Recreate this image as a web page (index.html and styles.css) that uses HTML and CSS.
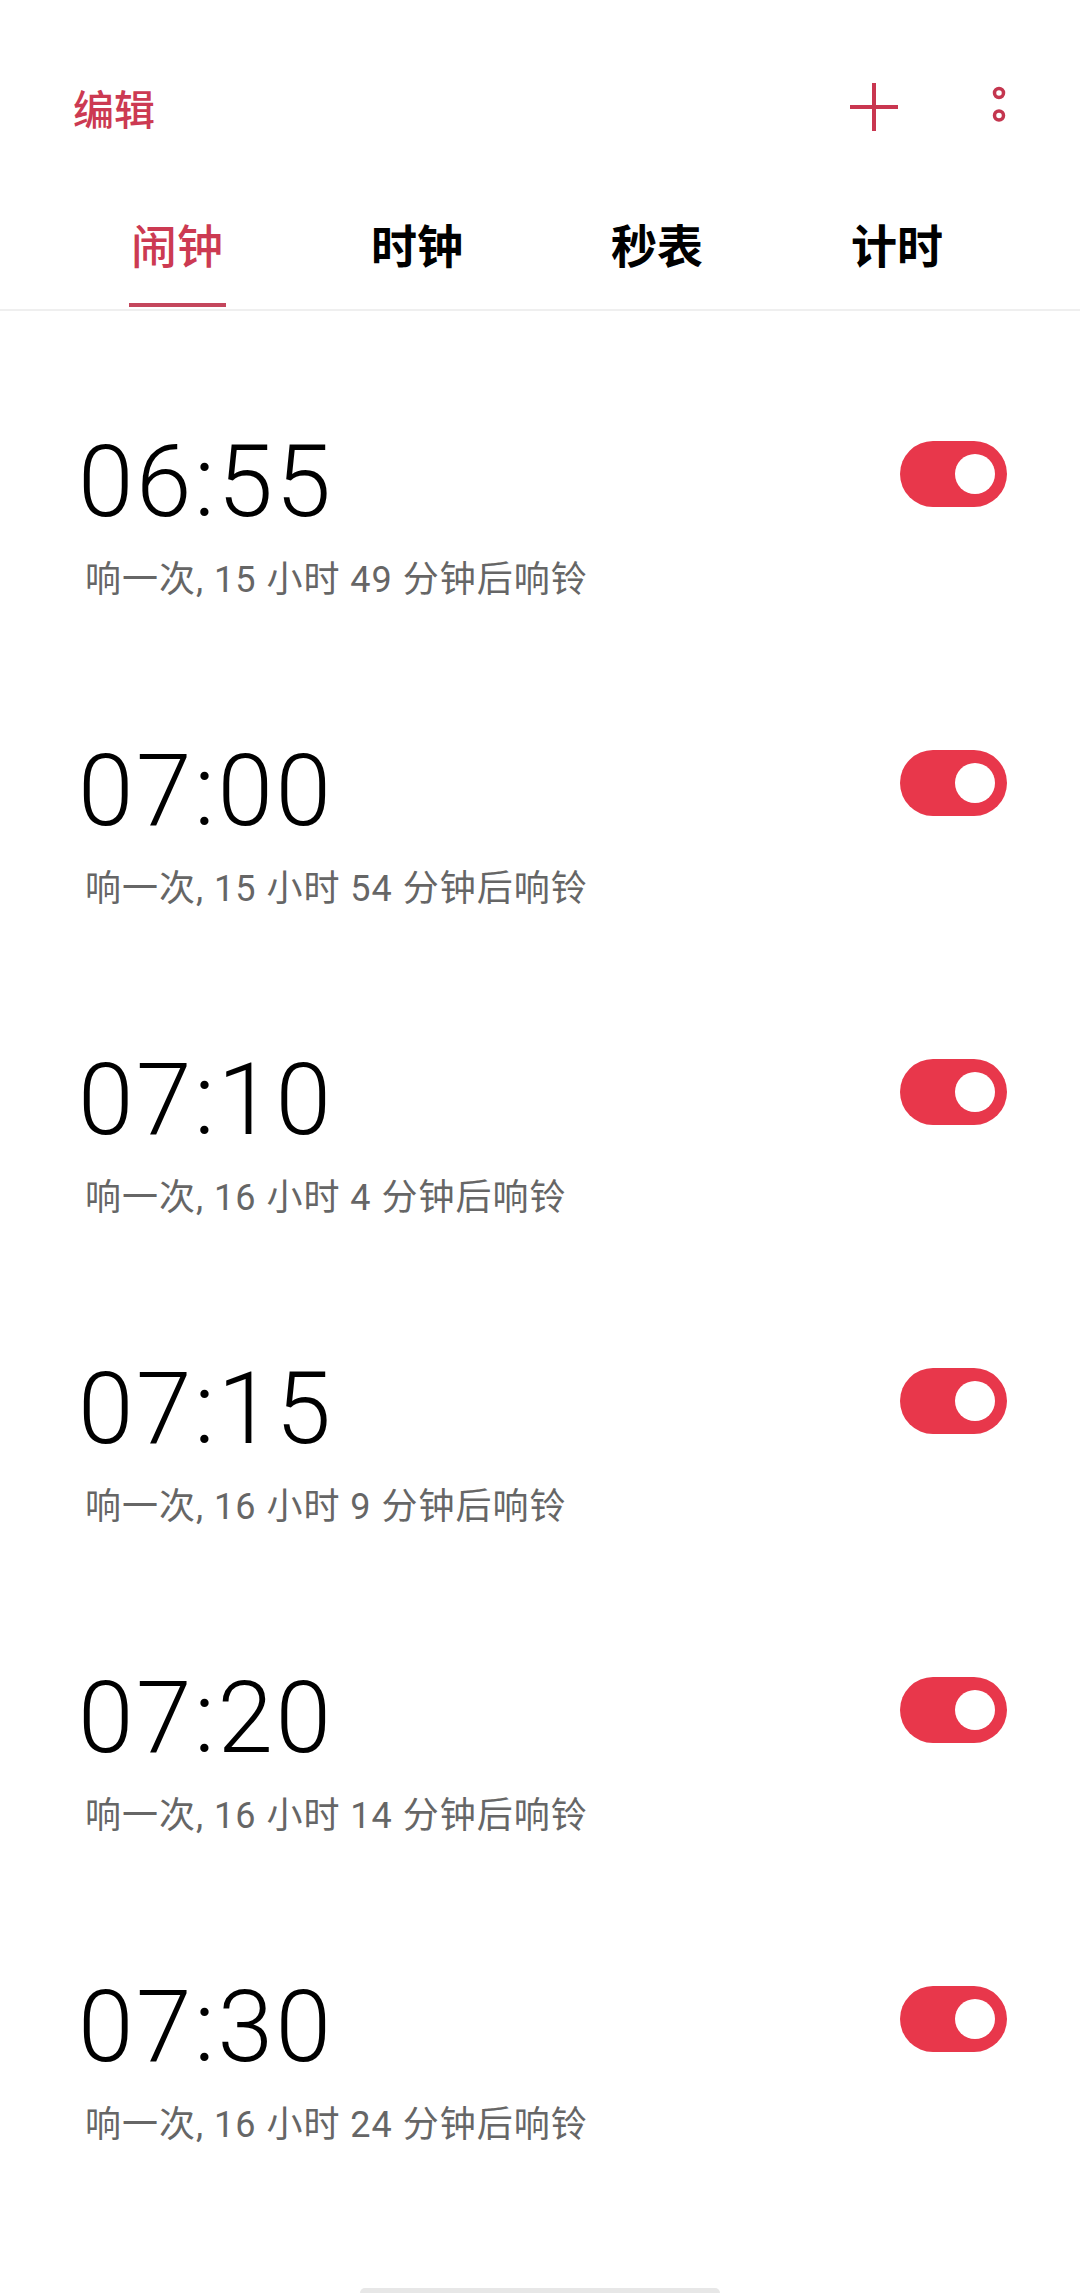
FILE: index.html
```html
<!DOCTYPE html>
<html lang="zh-CN">
<head>
    <meta charset="UTF-8">
    <meta name="viewport" content="width=device-width, initial-scale=1.0">
    <title>闹钟</title>
    <link rel="stylesheet" href="styles.css">
</head>
<body>
    <div class="app">
        <header class="topbar">
            <span class="edit-btn">编辑</span>
            <div class="actions">
                <svg class="icon-add" width="50" height="50" viewBox="0 0 50 50">
                    <line x1="25" y1="1" x2="25" y2="49" />
                    <line x1="1" y1="25" x2="49" y2="25" />
                </svg>
                <svg class="icon-more" width="14" height="36" viewBox="0 0 14 36">
                    <circle cx="7" cy="7" r="4.5" />
                    <circle cx="7" cy="29.5" r="4.5" />
                </svg>
            </div>
        </header>

        <nav class="tabs">
            <div class="tab active">
                <span class="tab-label">闹钟</span>
                <span class="tab-indicator"></span>
            </div>
            <div class="tab">
                <span class="tab-label">时钟</span>
                <span class="tab-indicator"></span>
            </div>
            <div class="tab">
                <span class="tab-label">秒表</span>
                <span class="tab-indicator"></span>
            </div>
            <div class="tab">
                <span class="tab-label">计时</span>
                <span class="tab-indicator"></span>
            </div>
        </nav>

        <ul class="alarm-list">
            <li class="alarm">
                <div class="alarm-info">
                    <div class="alarm-time">06:55</div>
                    <div class="alarm-desc">响一次, 15 小时 49 分钟后响铃</div>
                </div>
                <span class="switch on"><span class="knob"></span></span>
            </li>
            <li class="alarm">
                <div class="alarm-info">
                    <div class="alarm-time">07:00</div>
                    <div class="alarm-desc">响一次, 15 小时 54 分钟后响铃</div>
                </div>
                <span class="switch on"><span class="knob"></span></span>
            </li>
            <li class="alarm">
                <div class="alarm-info">
                    <div class="alarm-time">07:10</div>
                    <div class="alarm-desc">响一次, 16 小时 4 分钟后响铃</div>
                </div>
                <span class="switch on"><span class="knob"></span></span>
            </li>
            <li class="alarm">
                <div class="alarm-info">
                    <div class="alarm-time">07:15</div>
                    <div class="alarm-desc">响一次, 16 小时 9 分钟后响铃</div>
                </div>
                <span class="switch on"><span class="knob"></span></span>
            </li>
            <li class="alarm">
                <div class="alarm-info">
                    <div class="alarm-time">07:20</div>
                    <div class="alarm-desc">响一次, 16 小时 14 分钟后响铃</div>
                </div>
                <span class="switch on"><span class="knob"></span></span>
            </li>
            <li class="alarm">
                <div class="alarm-info">
                    <div class="alarm-time">07:30</div>
                    <div class="alarm-desc">响一次, 16 小时 24 分钟后响铃</div>
                </div>
                <span class="switch on"><span class="knob"></span></span>
            </li>
        </ul>

        <div class="home-area">
            <span class="home-bar"></span>
        </div>
    </div>
</body>
</html>
```

FILE: styles.css
```css
body {
    margin: 0;
    background-color: #fff;
    font-family: "Noto Sans CJK SC", "Noto Sans", sans-serif;
    color: #000;
}
.app {
    width: 1080px;
    height: 2293px;
    overflow: hidden;
}
.topbar {
    display: flex;
    justify-content: space-between;
    align-items: center;
    height: 214px;
    padding: 0 74px 0 73px;
    box-sizing: border-box;
}
.edit-btn {
    font-size: 41px;
    font-weight: 500;
    color: #cc3a52;
    line-height: 1;
}
.actions {
    display: flex;
    align-items: center;
    gap: 93px;
}
.icon-add line {
    stroke: #c93650;
    stroke-width: 4;
}
.icon-more {
    margin-top: -6px;
}
.icon-more circle {
    fill: none;
    stroke: #c4364f;
    stroke-width: 3.5;
}
.tabs {
    display: flex;
    height: 95px;
    padding: 0 63px 0 57px;
    border-bottom: 2px solid #efefef;
}
.tab {
    flex: 1;
    display: flex;
    flex-direction: column;
    align-items: center;
    padding-bottom: 2px;
}
.tab-label {
    font-size: 46px;
    font-weight: 700;
    line-height: 58px;
    color: #000;
}
.tab-indicator {
    margin-top: auto;
    width: 97px;
    height: 4px;
}
.tab.active .tab-label {
    font-weight: 500;
    color: #cc3a52;
}
.tab.active .tab-indicator {
    background-color: #c4465c;
}
.alarm-list {
    list-style: none;
    margin: 0;
    padding: 53px 0 0;
}
.alarm {
    display: flex;
    justify-content: space-between;
    align-items: flex-start;
    padding: 68px 73px 69px 78px;
}
.alarm-time {
    font-family: Roboto, "Noto Sans", sans-serif;
    font-weight: 300;
    font-size: 100px;
    line-height: 100px;
    letter-spacing: 2.5px;
    color: #000;
}
.alarm-desc {
    margin-top: 24px;
    padding-left: 7px;
    font-family: Roboto, "Noto Sans CJK SC", sans-serif;
    font-size: 36px;
    line-height: 48px;
    letter-spacing: 1px;
    color: #666;
}
.switch {
    display: flex;
    align-items: center;
    justify-content: flex-end;
    width: 107px;
    height: 66px;
    margin-top: 9px;
    padding-right: 12px;
    box-sizing: border-box;
    border-radius: 33px;
    background-color: #e8374b;
}
.knob {
    width: 40px;
    height: 40px;
    border-radius: 50%;
    background-color: #fff;
}
.home-area {
    padding-top: 70px;
}
.home-bar {
    display: block;
    width: 360px;
    height: 10px;
    margin: 0 auto;
    border-radius: 5px;
    background-color: #e7e7e7;
}
```
